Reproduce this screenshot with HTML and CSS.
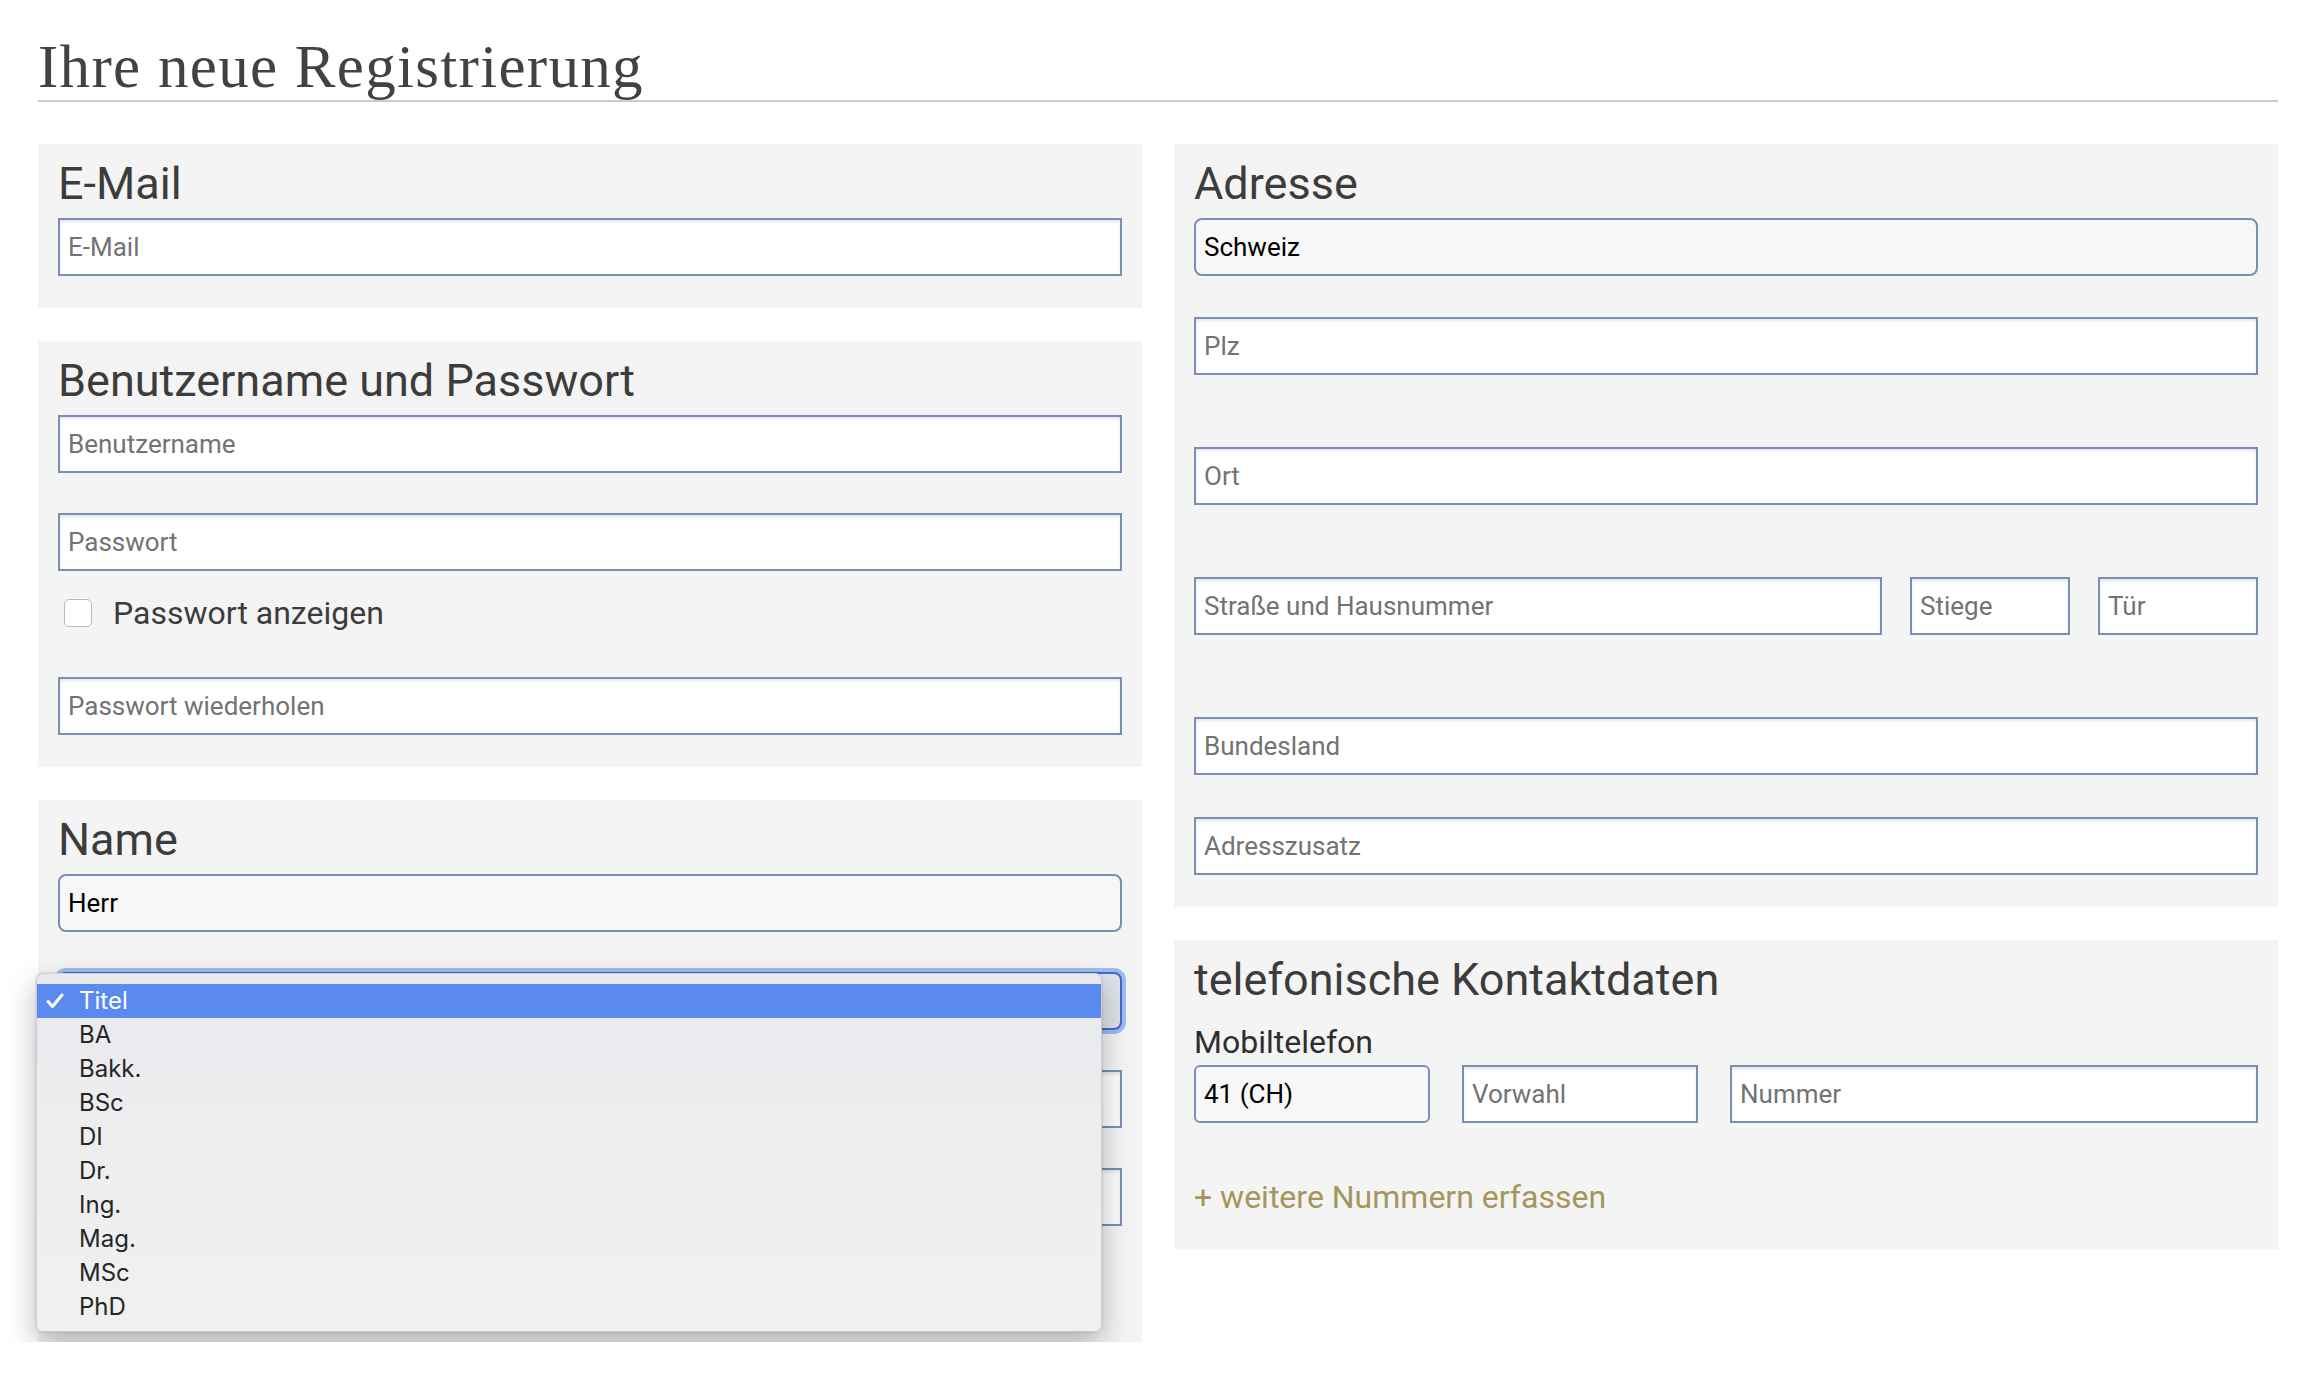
FILE: index.html
```html
<!DOCTYPE html>
<html lang="de">
<head>
<meta charset="utf-8">
<title>Ihre neue Registrierung</title>
<link rel="stylesheet" href="styles.css">
</head>
<body>
<div class="page">
  <h1 class="title">Ihre neue Registrierung</h1>
  <div class="columns">
    <div class="col">
      <section class="panel">
        <h2 class="panel-title">E-Mail</h2>
        <input class="field" type="text" placeholder="E-Mail">
      </section>

      <section class="panel">
        <h2 class="panel-title">Benutzername und Passwort</h2>
        <input class="field" type="text" placeholder="Benutzername">
        <input class="field mt-40" type="password" placeholder="Passwort">
        <label class="check"><span class="check-box"></span><span class="check-label">Passwort anzeigen</span></label>
        <input class="field mt-49" type="password" placeholder="Passwort wiederholen">
      </section>

      <section class="panel panel-name">
        <h2 class="panel-title">Name</h2>
        <select class="field select"><option>Herr</option></select>
        <div class="field select focused mt-40"></div>
        <input class="field mt-40" type="text" placeholder="Vorname">
        <input class="field mt-40" type="text" placeholder="Nachname">

        <div class="popup">
          <div class="popup-item selected">
            <svg class="tick" width="18" height="16" viewBox="0 0 18 16"><path d="M2 8.5 L6.5 13.5 L16 2" fill="none" stroke="#fff" stroke-width="3" stroke-linecap="round" stroke-linejoin="round"/></svg>
            Titel
          </div>
          <div class="popup-item">BA</div>
          <div class="popup-item">Bakk.</div>
          <div class="popup-item">BSc</div>
          <div class="popup-item">DI</div>
          <div class="popup-item">Dr.</div>
          <div class="popup-item">Ing.</div>
          <div class="popup-item">Mag.</div>
          <div class="popup-item">MSc</div>
          <div class="popup-item">PhD</div>
        </div>
      </section>
    </div>

    <div class="col">
      <section class="panel">
        <h2 class="panel-title">Adresse</h2>
        <select class="field select"><option>Schweiz</option></select>
        <input class="field mt-41" type="text" placeholder="Plz">
        <input class="field mt-72" type="text" placeholder="Ort">
        <div class="street-row mt-72">
          <input class="field" type="text" placeholder="Straße und Hausnummer">
          <input class="field" type="text" placeholder="Stiege">
          <input class="field" type="text" placeholder="Tür">
        </div>
        <input class="field mt-82" type="text" placeholder="Bundesland">
        <input class="field mt-42" type="text" placeholder="Adresszusatz">
      </section>

      <section class="panel panel-phone">
        <h2 class="panel-title">telefonische Kontaktdaten</h2>
        <div class="phone-label">Mobiltelefon</div>
        <div class="phone-row">
          <select class="field select small-radius"><option>41 (CH)</option></select>
          <input class="field" type="text" placeholder="Vorwahl">
          <input class="field" type="text" placeholder="Nummer">
        </div>
        <a class="add-link" href="#">+ weitere Nummern erfassen</a>
      </section>
    </div>
  </div>
</div>
</body>
</html>
```

FILE: styles.css
```css
* {
  box-sizing: border-box;
}

html, body {
  margin: 0;
  padding: 0;
  background: #ffffff;
}

body {
  font-family: Roboto, "Liberation Sans", sans-serif;
  color: #3d3d3d;
}

.page {
  width: 2240px;
  margin-left: 38px;
}

.title {
  margin: 0;
  padding-top: 33px;
  font-family: "Liberation Serif", Georgia, serif;
  font-weight: 400;
  font-size: 61px;
  line-height: 67px;
  letter-spacing: 1.3px;
  color: #424242;
  border-bottom: 2px solid #cccccc;
}

.columns {
  margin-top: 42px;
  display: grid;
  grid-template-columns: 1104px 1104px;
  column-gap: 32px;
  align-items: start;
}

.col {
  display: flex;
  flex-direction: column;
  gap: 33px;
}

.panel {
  background: #f4f4f4;
  padding: 14px 20px 32px 20px;
  display: flex;
  flex-direction: column;
}

.panel-name {
  position: relative;
  padding-bottom: 116px;
}

.panel-phone {
  padding-bottom: 33px;
}

.panel-title {
  margin: 0 0 8px 0;
  font-size: 45px;
  line-height: 52px;
  font-weight: 400;
  color: #3c3c3c;
}

.field {
  display: block;
  width: 100%;
  height: 58px;
  margin: 0;
  padding: 0 8px;
  border: 2px solid #7a8eb6;
  border-radius: 0;
  background: #ffffff;
  box-shadow: inset 0 2px 3px rgba(0, 0, 0, 0.10);
  font-family: Roboto, "Liberation Sans", sans-serif;
  font-size: 26px;
  color: #111111;
  outline: none;
}

.field::placeholder {
  color: #737373;
  opacity: 1;
}

.select {
  -webkit-appearance: none;
  appearance: none;
  border-radius: 8px;
  background: #f7f7f7;
  color: #000000;
  box-shadow: none;
}

.small-radius {
  border-radius: 6px;
}

.focused {
  background: #dfe2e8;
  border-color: #3f6ccb;
  box-shadow: 0 0 0 4px rgba(92, 140, 238, 0.55);
}

.mt-40 { margin-top: 40px; }
.mt-41 { margin-top: 41px; }
.mt-42 { margin-top: 42px; }
.mt-49 { margin-top: 49px; }
.mt-72 { margin-top: 72px; }
.mt-82 { margin-top: 82px; }

.check {
  display: flex;
  align-items: center;
  height: 30px;
  margin-top: 27px;
  padding-left: 6px;
}

.check-box {
  width: 28px;
  height: 28px;
  border: 1px solid #b9b9b9;
  border-radius: 5px;
  background: #ffffff;
  flex: none;
}

.check-label {
  margin-left: 21px;
  font-size: 32px;
  line-height: 38px;
  color: #3c3c3c;
}

.street-row {
  display: grid;
  grid-template-columns: 1fr 160px 160px;
  column-gap: 28px;
}

.phone-label {
  margin-top: 9px;
  font-size: 32px;
  line-height: 38px;
  font-weight: 400;
  color: #2e2e2e;
}

.phone-row {
  margin-top: 4px;
  display: grid;
  grid-template-columns: 236px 236px 1fr;
  column-gap: 32px;
}

.add-link {
  display: block;
  margin-top: 55px;
  font-size: 32px;
  line-height: 38px;
  color: #a5975a;
  text-decoration: none;
}

/* Open dropdown menu */
.popup {
  position: absolute;
  top: 173px;
  left: -2px;
  width: 1066px;
  padding: 10px 0 7px 0;
  border-radius: 7px;
  background: linear-gradient(to bottom, #e8e9ed 0%, #eeeef0 50%, #f0f0f0 100%);
  border: 1px solid rgba(0, 0, 0, 0.12);
  box-shadow: 0 12px 30px rgba(0, 0, 0, 0.28), 0 0 2px rgba(0, 0, 0, 0.2);
  font-family: Inter, "Liberation Sans", sans-serif;
  font-size: 24px;
  color: #262626;
}

.popup-item {
  position: relative;
  height: 34px;
  line-height: 34px;
  padding-left: 42px;
}

.popup-item.selected {
  background: #5a8aef;
  color: #ffffff;
}

.tick {
  position: absolute;
  left: 9px;
  top: 9px;
}
```
